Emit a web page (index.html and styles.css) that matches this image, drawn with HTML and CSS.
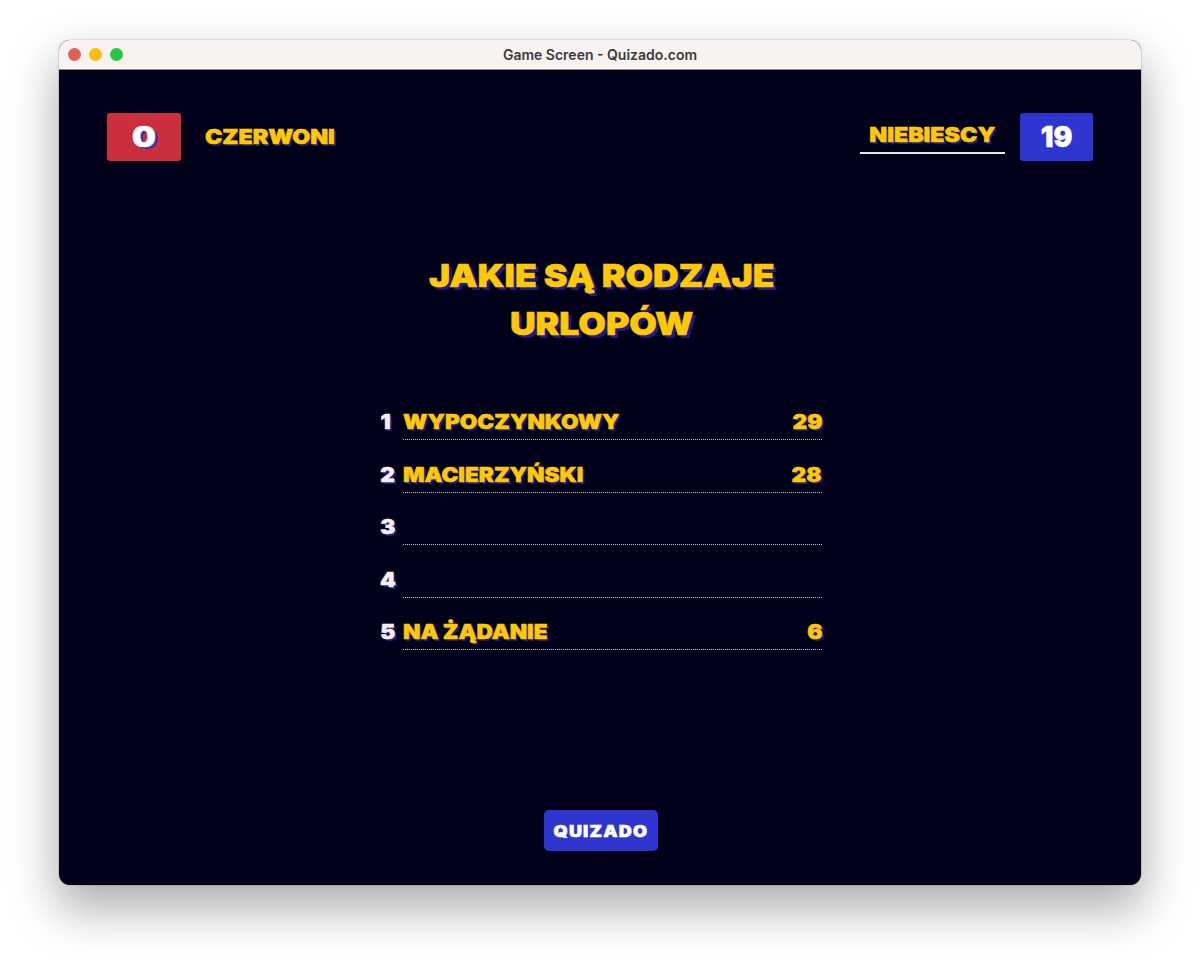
FILE: index.html
```html
<!DOCTYPE html>
<html lang="pl">

<head>
    <meta charset="UTF-8">
    <meta name="viewport" content="width=device-width, initial-scale=1.0">
    <title>Game Screen - Quizado.com</title>
    <link rel="stylesheet" href="styles.css">
</head>

<body>
    <div class="window">
        <div class="titlebar">
            <div class="dots">
                <span class="dot dot-red"></span>
                <span class="dot dot-yellow"></span>
                <span class="dot dot-green"></span>
            </div>
            <p class="window-title">Game Screen - Quizado.com</p>
        </div>
        <div class="game">
            <div class="teams">
                <div class="team">
                    <div class="score score-red"><span class="wide">0</span></div>
                    <div class="team-name"><span class="wide wide-left">CZERWONI</span></div>
                </div>
                <div class="team team-active">
                    <div class="team-name"><span class="wide">NIEBIESCY</span></div>
                    <div class="score score-blue"><span class="wide">19</span></div>
                </div>
            </div>
            <h1 class="question"><span class="wide">JAKIE SĄ RODZAJE</span><br><span class="wide">URLOPÓW</span></h1>
            <ol class="answers">
                <li class="answer">
                    <span class="answer-num"><span class="wide">1</span></span>
                    <div class="answer-line">
                        <span class="wide wide-left">WYPOCZYNKOWY</span>
                        <span class="wide wide-right">29</span>
                    </div>
                </li>
                <li class="answer">
                    <span class="answer-num"><span class="wide">2</span></span>
                    <div class="answer-line">
                        <span class="wide wide-left">MACIERZYŃSKI</span>
                        <span class="wide wide-right">28</span>
                    </div>
                </li>
                <li class="answer">
                    <span class="answer-num"><span class="wide">3</span></span>
                    <div class="answer-line"></div>
                </li>
                <li class="answer">
                    <span class="answer-num"><span class="wide">4</span></span>
                    <div class="answer-line"></div>
                </li>
                <li class="answer">
                    <span class="answer-num"><span class="wide">5</span></span>
                    <div class="answer-line">
                        <span class="wide wide-left">NA ŻĄDANIE</span>
                        <span class="wide wide-right">6</span>
                    </div>
                </li>
            </ol>
            <div class="logo"><span class="wide">QUIZADO</span></div>
        </div>
    </div>
</body>

</html>
```

FILE: styles.css
```css
body {
    margin: 0;
    height: 963px;
    padding: 40px 59px 78px;
    box-sizing: border-box;
    background: #fff;
    font-family: Inter, Arial, sans-serif;
    overflow: hidden;
}

.window {
    height: 100%;
    display: flex;
    flex-direction: column;
    border-radius: 11px;
    overflow: hidden;
    background: #01011a;
    box-shadow: 0 0 0 0.5px rgba(0, 0, 0, 0.2), 0 22px 48px 2px rgba(0, 0, 0, 0.33);
}

.titlebar {
    height: 30px;
    flex: none;
    display: flex;
    align-items: center;
    justify-content: center;
    position: relative;
    background: #f8f2f1;
    border-bottom: 1px solid #8f8c8c;
    box-sizing: border-box;
}

.dots {
    position: absolute;
    left: 9px;
    top: 8px;
    display: flex;
    gap: 8px;
}

.dot {
    width: 13px;
    height: 13px;
    border-radius: 50%;
}

.dot-red {
    background: #e0605a;
}

.dot-yellow {
    background: #f6bf0e;
}

.dot-green {
    background: #29c840;
}

.window-title {
    margin: 0;
    font-size: 14px;
    font-weight: 600;
    color: #3d3a3a;
}

.game {
    flex: 1;
    display: flex;
    flex-direction: column;
    align-items: center;
    padding: 43px 48px 34px;
    color: #ffc800;
    font-weight: 900;
    -webkit-text-stroke: 0.5px currentColor;
    text-shadow: 2px 2px 0 #1c1c86;
}

.wide {
    display: inline-block;
    transform: scaleX(1.13);
}

.wide-left {
    transform-origin: left center;
}

.wide-right {
    transform-origin: right center;
}

.teams {
    width: 100%;
    display: flex;
    justify-content: space-between;
}

.team {
    display: flex;
    align-items: center;
    gap: 24px;
}

.team-active {
    gap: 15px;
}

.team-name {
    font-size: 20px;
    line-height: 24px;
    margin-top: -1px;
}

.team-name .wide {
    transform: scaleX(1.16);
}

.team-active .team-name {
    width: 145px;
    height: 32px;
    line-height: 30px;
    margin-top: 0;
    text-align: center;
    border-bottom: 2px solid #e9e6e6;
}

.score {
    width: 74px;
    height: 48px;
    display: flex;
    align-items: center;
    justify-content: center;
    border-radius: 3px;
    font-size: 28px;
    color: #fff;
    text-shadow: 2px 2px 0 #3038c8;
}

.score-red {
    background: #cb2f3c;
}

.score-red .wide {
    transform: scaleX(1.2);
}

.score-blue {
    width: 73px;
    background: #2f36cf;
}

.score-blue .wide {
    transform: scaleX(1);
}

.question {
    margin: 91px 0 0 3px;
    font-size: 32px;
    line-height: 48px;
    font-weight: 900;
    text-align: center;
    text-shadow: 3px 3px 0 #1c1c86;
}

.question .wide {
    transform: scaleX(1.11);
}

.answers {
    list-style: none;
    margin: 51px 0 0 3px;
    padding: 0;
    width: 441px;
    font-size: 20px;
}

.answer {
    display: flex;
    height: 52.6px;
}

.answer-num {
    width: 22px;
    flex: none;
    padding-top: 11px;
    line-height: 24px;
    color: #f5eff0;
}

.answer-line {
    flex: 1;
    height: 29px;
    padding-top: 11px;
    display: flex;
    justify-content: space-between;
    line-height: 24px;
    border-bottom: 1px dotted #c9c5c5;
}

.logo {
    margin: auto 0 0 2px;
    width: 114px;
    height: 41px;
    display: flex;
    align-items: center;
    justify-content: center;
    border-radius: 5px;
    background: #2f36cf;
    color: #fff;
    font-size: 16px;
    letter-spacing: 1px;
    text-shadow: none;
}
```
